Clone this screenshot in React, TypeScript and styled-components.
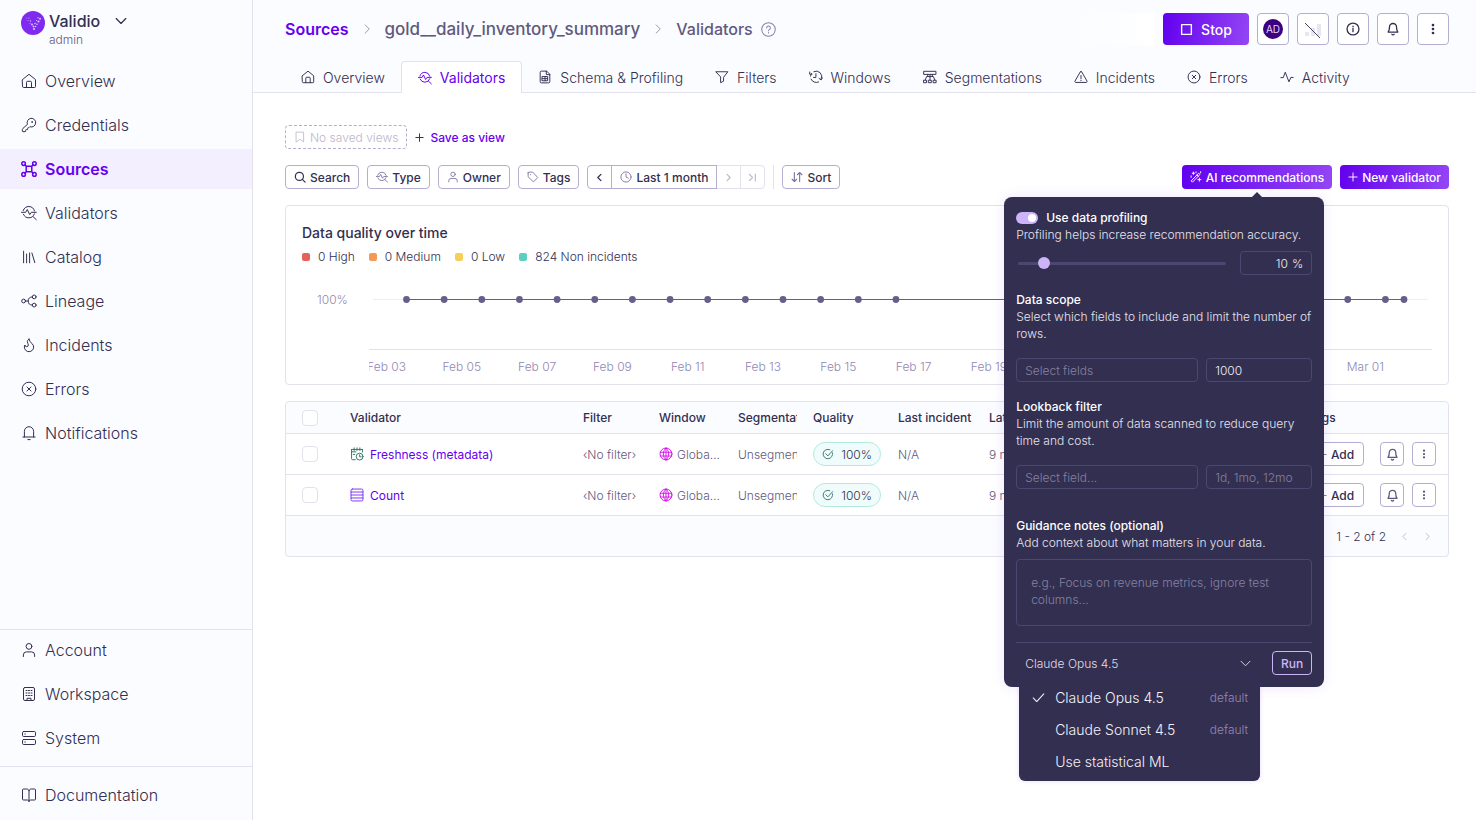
import React, { useState } from "react";
import styled, { createGlobalStyle, css } from "styled-components";
import { Flame, KeyRound } from "lucide-react";

const ink = "#332f50";
const body = "#5f5a7d";
const muted = "#9188b3";
const line = "#e3e1ee";
const control = "#b3aed2";
const violet = "#6700ef";
const tint = "#fbfcff";
const dark = "#332f50";
const darkLine = "#4c4770";
const lilac = "#cdb4f8";

const GlobalStyle = createGlobalStyle`
  *, *::before, *::after { box-sizing: border-box; }
  html, body, #root { height: 100%; }
  body {
    margin: 0;
    background: #fff;
    color: ${ink};
    font-family: Inter, "Liberation Sans", sans-serif;
    font-size: 12px;
    font-weight: 300;
    line-height: 17px;
  }
  button, input, select, textarea { font: inherit; color: inherit; margin: 0; }
  button { cursor: pointer; }
  a { text-decoration: none; color: inherit; }
  h1, h2, h3, p, ul { margin: 0; padding: 0; font: inherit; list-style: none; }
  svg { flex: none; display: block; }
`;

/* ---------- icons ---------- */

const shapes: Record<string, React.ReactNode> = {
  home: <path d="M1.5 6.6 8 1.3l6.5 5.3v6.9a1 1 0 0 1-1 1h-11a1 1 0 0 1-1-1zM5.5 14.5V9.3a1 1 0 0 1 1-1h3a1 1 0 0 1 1 1v5.2" />,
  sources: (
    <>
      <rect x="5.2" y="5.2" width="5.6" height="5.6" rx="1" />
      <circle cx="2.6" cy="2.6" r="1.8" />
      <circle cx="13.4" cy="2.6" r="1.8" />
      <circle cx="2.6" cy="13.4" r="1.8" />
      <circle cx="13.4" cy="13.4" r="1.8" />
      <path d="m3.9 3.9 1.6 1.6M12.1 3.9l-1.6 1.6M3.9 12.1l1.6-1.6M12.1 12.1l-1.6-1.6" />
    </>
  ),
  validators: (
    <>
      <path d="M2.4 9.2a5.9 5.9 0 0 0 11-.3M2.2 5.6a5.9 5.9 0 0 1 11.3.3" />
      <path d="M.5 7.3h4.2l1.6-2.8 2.4 5.2 1.6-2.4h5M12 11.6l3.3 3.1" />
    </>
  ),
  catalog: <path d="M2.6 2.2v11.6M5.6 5v8.8M8.6 4v9.8M10.9 4l2.9 9.6" />,
  lineage: (
    <>
      <circle cx="2.6" cy="8" r="1.9" />
      <circle cx="13.2" cy="3.9" r="1.9" />
      <circle cx="13.2" cy="12.1" r="1.9" />
      <path d="M4.5 8H7M11.3 3.9C8.6 3.9 7.2 5.4 7.2 8s1.4 4.1 4.1 4.1" />
    </>
  ),
  error: (
    <>
      <circle cx="8" cy="8" r="6.8" />
      <path d="m6 6 4 4M10 6l-4 4" />
    </>
  ),
  bell: <path d="M1.9 12h12.2M3.4 12V6.3a4.6 4.6 0 0 1 9.2 0V12M6.8 14.6h2.4" />,
  bellRound: <path d="M2.4 11.5C3.6 10 4 8.5 4 5.7a4 4 0 0 1 8 0c0 2.8.4 4.3 1.6 5.8zM6.7 14a1.5 1.5 0 0 0 2.6 0" />,
  user: (
    <>
      <circle cx="8" cy="4.4" r="2.9" />
      <path d="M2.4 14.5v-1.6a3 3 0 0 1 3-3h5.2a3 3 0 0 1 3 3v1.6" />
    </>
  ),
  building: (
    <>
      <rect x="2.5" y="1.5" width="11" height="13" rx="1.5" />
      <path d="M6 14.5v-2.2h4v2.2" />
      <path d="M5 4.5h1M7.5 4.5h1M10 4.5h1M5 7h1M7.5 7h1M10 7h1M5 9.5h1M7.5 9.5h1M10 9.5h1" />
    </>
  ),
  system: (
    <>
      <rect x="1.5" y="1.5" width="13" height="5" rx="1.2" />
      <rect x="1.5" y="9.5" width="13" height="5" rx="1.2" />
      <path d="M3.8 4h.6M3.8 12h.6" />
    </>
  ),
  book: <path d="M8 3.5v11M8 3.5C7.6 2.6 6.9 2 5.8 2H2.5a1 1 0 0 0-1 1v9a1 1 0 0 0 1 1h4c.9 0 1.5.6 1.5 1.5 0-.9.6-1.5 1.5-1.5h4a1 1 0 0 0 1-1V3a1 1 0 0 0-1-1h-3.3c-1.1 0-1.8.6-2.2 1.5z" />,
  down: <path d="m2.5 5.2 5.5 5.6 5.5-5.6" />,
  right: <path d="M5.5 2.5 11 8l-5.5 5.5" />,
  left: <path d="M10.5 2.5 5 8l5.5 5.5" />,
  end: <path d="M2.5 2.5 8 8l-5.5 5.5M13 2v12" />,
  help: (
    <>
      <circle cx="8" cy="8" r="7.2" />
      <path d="M6 6.3a2 2 0 1 1 2.9 1.8c-.7.4-.9.7-.9 1.3M8 11.3v.5" />
    </>
  ),
  schema: (
    <>
      <path d="M9.5 1.3H3.8a1.3 1.3 0 0 0-1.3 1.3v10.8a1.3 1.3 0 0 0 1.3 1.3h8.4a1.3 1.3 0 0 0 1.3-1.3V5.3zM9.5 1.3v4h4" />
      <path d="M5 7.5h6v4.8H5zM5 9.9h6M8 7.5v4.8" />
    </>
  ),
  filter: <path d="M1.3 2h13.4L9.8 8.3v4.5l-3.4 1.7V8.3z" />,
  windows: (
    <>
      <path d="M2.3 10.4a6.3 6.3 0 0 0 8.7 3.3M1.8 7a6.3 6.3 0 0 1 1-3M5.5 1.9a6.3 6.3 0 0 1 8.4 8.5" />
      <path d="M.8 2.3v2.5h2.7M15.5 8.8l-1.6 2.5-2.4-1.6M7.9 4.2v4.3H5.2" />
    </>
  ),
  segments: (
    <>
      <path d="M1.2 1.5h13.6V5H1.2z" />
      <path d="M8 5v6.5M2.5 11.5l1.6-4h7.8l1.6 4M5.4 5v2.5M10.6 5v2.5" />
      <path d="M1 11.7h3v2.8H1zM6.5 11.7h3v2.8h-3zM12 11.7h3v2.8h-3z" />
    </>
  ),
  warning: <path d="M8 1.8c.4 0 .7.2.9.5l6 10.4c.3.7-.1 1.5-.9 1.5H2c-.8 0-1.2-.8-.9-1.5l6-10.4c.2-.3.5-.5.9-.5zM8 6.3v3.5M8 11.6v.6" />,
  activity: <path d="M1 8.7h2.7L6 2.5l4.2 11 2.2-5H15" />,
  bookmark: <path d="M3.2 1.5h9.6v13L8 11l-4.8 3.5z" />,
  plus: <path d="M8 1.5v13M1.5 8h13" />,
  search: (
    <>
      <circle cx="7.2" cy="7.2" r="5.4" />
      <path d="m11.2 11.2 3.6 3.6" />
    </>
  ),
  tag: (
    <>
      <path d="M1.5 2.5v5.2l7 6.8 5.8-5.8-6.6-7.2H2.5a1 1 0 0 0-1 1z" />
      <path d="M4.7 4.9h.4" />
    </>
  ),
  clock: (
    <>
      <circle cx="8" cy="8" r="6.8" />
      <path d="M8 3.8V8l3 1.4" />
    </>
  ),
  sort: <path d="M4.5 2v12M1.5 11l3 3 3-3M11.5 14V2M8.5 5l3-3 3 3" />,
  wand: <path d="m2 12.8 9.6-9.9 1.7 1.7L3.7 14.5zM9.3 5.3l1.7 1.7M4.5 1.5v3M3 3h3M12.5 9.5v4M10.5 11.5h4M1.5 6.5v2M8 1.2v1.2M14.2 1v1.5" />,
  stop: <rect x="2" y="2" width="12" height="12" />,
  info: (
    <>
      <circle cx="8" cy="8" r="6.8" />
      <path d="M8 7.3V11M8 4.8v.5" />
    </>
  ),
  dots: (
    <g fill="currentColor" stroke="none">
      <circle cx="8" cy="2.7" r="1.8" />
      <circle cx="8" cy="8" r="1.8" />
      <circle cx="8" cy="13.3" r="1.8" />
    </g>
  ),
  calendar: (
    <>
      <path d="M6 14.5H3a1.2 1.2 0 0 1-1.2-1.2V2.8M14.2 5.8v-3M1.8 2.8h12.4M1.8 5.5h5M4.8 1v3M8 1v3M11.3 1v3M3.8 8.5h1.5" />
      <circle cx="11" cy="11" r="3.9" />
      <path d="M11 9v2.2h1.8" />
    </>
  ),
  rows: (
    <>
      <rect x="1.2" y="1.2" width="13.6" height="13.6" rx="1.5" />
      <path d="M1.2 4.6h13.6M1.2 8h13.6M1.2 11.4h13.6" />
    </>
  ),
  globe: (
    <>
      <circle cx="8" cy="8" r="6.8" />
      <path d="M1.5 6h13M1.5 10.3h13M8 1.2v13.6M8 1.2C3.8 5 3.8 11 8 14.8M8 1.2c4.2 3.8 4.2 9.8 0 13.6" />
    </>
  ),
  verified: <path d="M13.9 6.3A6.3 6.3 0 1 1 10.5 2.3M5 7.6l2.8 2.9 6.4-7" />,
  check: <path d="m1.5 8.6 4.3 4.4L14.5 3.6" />,
};

const Icon = ({ name, size = 14, width = 1.1 }: { name: string; size?: number; width?: number }) => (
  <svg width={size} height={size} viewBox="0 0 16 16" fill="none" stroke="currentColor" strokeWidth={width} strokeLinecap="round" strokeLinejoin="round" aria-hidden="true">
    {shapes[name]}
  </svg>
);

const logoDots: [number, number, number][] = [
  [5.5, 7, 0.4], [8, 7, 0.6], [17, 6.8, 0.7], [19, 7.8, 1], [7, 9.5, 0.5], [9.5, 10, 0.7],
  [15.5, 9.5, 0.6], [17.5, 10.5, 1.1], [9, 12.5, 0.5], [11, 13.5, 1], [14, 12.5, 0.8],
  [16, 13.3, 0.8], [12.5, 15.5, 0.9], [14.5, 15.5, 0.8], [13, 18, 1.1],
];
const Logo = () => (
  <svg width="24" height="24" viewBox="0 0 24 24" aria-hidden="true">
    <circle cx="12" cy="12" r="12" fill="#7f2aee" />
    <g fill="#d9c0ff">
      {logoDots.map(([x, y, r]) => <circle key={`${x}-${y}`} cx={x} cy={y} r={r} />)}
    </g>
  </svg>
);

const NoSignal = () => (
  <svg width="18" height="18" viewBox="0 0 18 18" aria-hidden="true">
    <path d="M1 12h4v4H1zM7 8h4v8H7zM13 4h4v12h-4z" fill="#e8e6f1" />
    <path d="M1 3 16 18" stroke={ink} strokeWidth="0.9" />
  </svg>
);

/* ---------- shell ---------- */

const Shell = styled.div`
  display: flex;
  min-height: 100%;
`;

const Sidebar = styled.aside`
  flex: none;
  display: flex;
  flex-direction: column;
  width: 253px;
  background: ${tint};
  border-right: 1px solid ${line};
`;

const Brand = styled.button`
  display: flex;
  align-items: flex-start;
  gap: 4px;
  height: 61px;
  padding: 11px 21px 0;
  border: 0;
  background: none;
  text-align: left;
`;

const BrandText = styled.span`
  display: flex;
  flex-direction: column;
  margin-right: 10px;
  color: ${body};
  font-weight: 300;
  strong {
    color: ${ink};
    font-size: 16px;
    font-weight: 500;
    line-height: 20px;
  }
`;

const BrandCaret = styled.span`
  padding-top: 3px;
`;

const NavGroup = styled.ul<{ $ruled?: boolean; $end?: boolean }>`
  display: flex;
  flex-direction: column;
  gap: 4px;
  ${(p) => p.$ruled && css`border-top: 1px solid ${line};`}
  ${(p) => p.$ruled && !p.$end && css`margin-top: auto; padding-bottom: 8px;`}
  ${(p) => p.$end && css`padding: 8px 0 5px;`}
`;

const NavLink = styled.a<{ $active?: boolean }>`
  display: flex;
  align-items: center;
  gap: 8px;
  height: 40px;
  padding: 0 21px;
  font-size: 16px;
  color: ${ink};
  ${(p) => p.$active && css`
    background: #f4effe;
    color: ${violet};
    font-weight: 600;
  `}
`;

const Main = styled.main`
  flex: 1;
  min-width: 0;
  display: flex;
  flex-direction: column;
`;

const Header = styled.header`
  padding: 13px 27px 0 32px;
  background: ${tint};
  border-bottom: 1px solid ${line};
`;

const HeaderRow = styled.div`
  display: flex;
  align-items: center;
  justify-content: space-between;
  height: 32px;
`;

const Crumbs = styled.nav`
  display: flex;
  align-items: center;
  gap: 12px;
  font-size: 16px;
  font-weight: 500;
  color: ${body};
  svg { color: #8983a8; }
`;

const CrumbLink = styled.a<{ $root?: boolean }>`
  font-size: 17px;
  ${(p) => p.$root && css`color: ${violet}; font-size: 16px; font-weight: 600;`}
`;

const CrumbEnd = styled.span`
  display: flex;
  align-items: center;
  gap: 8px;
`;

const HeaderActions = styled.div`
  display: flex;
  gap: 8px;
`;

const Fade = styled.div`
  width: 75px;
  background: linear-gradient(90deg, ${tint}, #fff);
`;

const gradient = "linear-gradient(100deg, #6200ee, #9446f4)";

const StopButton = styled.button`
  display: flex;
  align-items: center;
  justify-content: center;
  gap: 8px;
  width: 86px;
  border: 0;
  border-radius: 4px;
  background: ${gradient};
  color: #fff;
  font-size: 14px;
  font-weight: 500;
`;

const SquareButton = styled.button<{ $small?: boolean }>`
  display: grid;
  place-items: center;
  width: ${(p) => (p.$small ? 24 : 32)}px;
  height: ${(p) => (p.$small ? 24 : 32)}px;
  padding: 0;
  border: 1px solid ${control};
  border-radius: 4px;
  background: #fff;
`;

const Avatar = styled.span`
  display: grid;
  place-items: center;
  width: 20px;
  height: 20px;
  border-radius: 50%;
  background: #3c0080;
  color: #e3d3ff;
  font-size: 10px;
  font-weight: 400;
`;

const Tabs = styled.nav`
  display: flex;
  margin: 16px 0 -1px;
`;

const Tab = styled.a<{ $active?: boolean }>`
  display: flex;
  align-items: center;
  gap: 8px;
  height: 32px;
  padding: 0 16px;
  font-size: 14px;
  white-space: nowrap;
  ${(p) => p.$active && css`
    border: 1px solid ${line};
    border-bottom: 0;
    border-radius: 4px 4px 0 0;
    background: #fff;
    color: ${violet};
    font-weight: 400;
  `}
`;

/* ---------- content ---------- */

const Content = styled.div`
  display: flex;
  flex-direction: column;
  gap: 16px;
  padding: 32px 27px 32px 32px;
`;

const Row = styled.div`
  display: flex;
  align-items: center;
  gap: 8px;
`;

const smallButton = css`
  display: flex;
  align-items: center;
  justify-content: center;
  gap: 4px;
  height: 24px;
  padding: 0 8px;
  border: 1px solid ${control};
  border-radius: 4px;
  background: #fff;
  color: ${ink};
  font-weight: 500;
  white-space: nowrap;
`;

const Button = styled.button`
  ${smallButton}
  svg { color: #7d76a0; }
  &:first-child svg { color: ${ink}; }
`;

const EmptyViews = styled.button`
  ${smallButton}
  border-style: dashed;
  color: #bab6cd;
  font-weight: 300;
`;

const TextButton = styled.button`
  ${smallButton}
  gap: 6px;
  border: 0;
  padding: 0;
  background: none;
  color: ${violet};
`;

const PrimaryButton = styled.button`
  ${smallButton}
  border: 0;
  background: ${gradient};
  color: #fff;
`;

const Segmented = styled.div`
  display: flex;
  isolation: isolate;
`;

const Segment = styled.button<{ $edge?: "left" | "right"; $icon?: boolean }>`
  ${smallButton}
  position: relative;
  margin-right: -1px;
  border-radius: 0;
  ${(p) => p.$icon && css`padding: 0 7px;`}
  ${(p) => !p.$icon && css`svg { color: #7d76a0; }`}
  ${(p) => p.$edge === "left" && css`border-radius: 4px 0 0 4px;`}
  ${(p) => p.$edge === "right" && css`border-radius: 0 4px 4px 0; margin-right: 0;`}
  &:disabled { color: #bab6cd; border-color: ${line}; z-index: -1; }
`;

const Divider = styled.span`
  width: 1px;
  height: 24px;
  background: ${line};
`;

const PushRight = styled.div`
  display: flex;
  gap: 8px;
  margin-left: auto;
`;

const Card = styled.section`
  border: 1px solid ${line};
  border-radius: 4px;
  padding: 18px 16px 0;
`;

const CardTitle = styled.h2`
  font-size: 14px;
  font-weight: 500;
  line-height: 18px;
`;

const Legend = styled.ul`
  display: flex;
  gap: 14px;
  margin-top: 6px;
`;

const LegendItem = styled.li<{ $color: string }>`
  display: flex;
  align-items: center;
  gap: 8px;
  &::before {
    content: "";
    width: 8px;
    height: 8px;
    border-radius: 2px;
    background: ${(p) => p.$color};
  }
`;

const Plot = styled.svg`
  width: 100%;
  height: 119px;
  text {
    font-size: 12px;
    fill: ${muted};
  }
`;

const TableCard = styled.section`
  border: 1px solid ${line};
  border-radius: 4px;
  background: ${tint};
  overflow: hidden;
`;

const Table = styled.table`
  width: 100%;
  table-layout: fixed;
  border-collapse: separate;
  border-spacing: 0;
  th, td {
    padding: 0 0 0 16px;
    border-bottom: 1px solid ${line};
    text-align: left;
    white-space: nowrap;
    overflow: hidden;
    font-weight: 300;
    color: ${body};
  }
  th { height: 32px; color: ${ink}; font-weight: 500; }
  td { height: 41px; background: #fff; }
`;

const Check = styled.input`
  appearance: none;
  display: block;
  width: 16px;
  height: 16px;
  margin: 0;
  border: 1px solid ${line};
  border-radius: 4px;
  background: #fff;
`;

const CellFlex = styled.div<{ $tone?: string }>`
  display: flex;
  align-items: center;
  gap: 6px;
  > svg { color: ${(p) => p.$tone ?? ink}; }
`;

const WindowCell = styled(CellFlex)`
  gap: 4px;
`;

const ItemLink = styled.a`
  color: ${violet};
  font-weight: 400;
`;

const Ellipsis = styled.span`
  overflow: hidden;
  text-overflow: ellipsis;
`;

const QualityPill = styled.span`
  display: flex;
  align-items: center;
  justify-content: space-between;
  width: 68px;
  height: 24px;
  padding: 0 8px;
  border: 1px solid #b2ebdd;
  border-radius: 12px;
  background: #effcfb;
  color: ${ink};
  svg { color: #417c72; }
`;

const AddButton = styled.button`
  ${smallButton}
  width: 56px;
`;

const Pager = styled.footer`
  display: flex;
  align-items: center;
  justify-content: flex-end;
  gap: 14px;
  height: 40px;
  padding: 0 16px;
  button {
    display: grid;
    padding: 0;
    border: 0;
    background: none;
    color: ${control};
  }
`;

/* ---------- recommendations popover ---------- */

const Anchor = styled.div`
  position: relative;
`;

const Popover = styled.form`
  position: absolute;
  z-index: 5;
  top: 32px;
  right: 8px;
  display: flex;
  flex-direction: column;
  gap: 16px;
  width: 320px;
  padding: 12px;
  border-radius: 8px;
  background: ${dark};
  color: #e6e4ee;
  box-shadow: 0 0 14px rgba(103, 0, 239, 0.1);
  &::before {
    content: "";
    position: absolute;
    top: -5px;
    right: 61px;
    border: 6px solid transparent;
    border-top: 0;
    border-bottom-color: ${dark};
  }
`;

const Group = styled.div<{ $spaced?: boolean }>`
  display: flex;
  flex-direction: column;
  ${(p) => p.$spaced && css`padding-top: 12px;`}
`;

const GroupTitle = styled.h3`
  color: #fff;
  font-weight: 500;
`;

const SwitchLabel = styled.label`
  display: flex;
  align-items: center;
  gap: 8px;
  color: #fff;
  font-weight: 500;
`;

const Switch = styled.input`
  appearance: none;
  display: flex;
  justify-content: flex-end;
  width: 22px;
  height: 12px;
  margin: 0;
  padding: 2px;
  border-radius: 6px;
  background: ${lilac};
  &::before {
    content: "";
    width: 8px;
    height: 8px;
    border-radius: 50%;
    background: #fff;
  }
  &:not(:checked) { justify-content: flex-start; background: ${darkLine}; }
`;

const FieldRow = styled.div<{ $top: number }>`
  display: flex;
  gap: 8px;
  margin-top: ${(p) => p.$top}px;
`;

const field = css`
  min-width: 0;
  height: 24px;
  padding: 0 8px;
  border: 1px solid ${darkLine};
  border-radius: 4px;
  background: transparent;
  color: #f0eef5;
  outline: 0;
  &::placeholder { color: #8681a0; opacity: 1; }
`;

const Input = styled.input<{ $wide?: boolean }>`
  ${field}
  ${(p) => (p.$wide ? css`flex: 1;` : css`width: 106px;`)}
`;

const Slider = styled.input`
  appearance: none;
  flex: 1;
  min-width: 0;
  height: 24px;
  margin: 0 6px 0 2px;
  background: transparent;
  &::-webkit-slider-runnable-track {
    height: 3px;
    border-radius: 2px;
    background: ${darkLine};
  }
  &::-webkit-slider-thumb {
    appearance: none;
    width: 12px;
    height: 12px;
    margin-top: -5px;
    border-radius: 50%;
    background: ${lilac};
  }
`;

const PercentBox = styled.label`
  ${field}
  display: flex;
  align-items: center;
  justify-content: flex-end;
  gap: 4px;
  width: 72px;
  input {
    width: 32px;
    padding: 0;
    border: 0;
    outline: 0;
    background: none;
    text-align: right;
  }
`;

const Notes = styled.textarea`
  ${field}
  height: 67px;
  margin-top: 8px;
  padding: 14px;
  line-height: 17px;
  resize: none;
`;

const RunRow = styled.div`
  position: relative;
  display: flex;
  gap: 8px;
  padding-top: 8px;
  border-top: 1px solid ${darkLine};
`;

const ModelPicker = styled.div`
  flex: 1;
  display: grid;
  align-items: center;
  color: #e0deea;
  > * { grid-area: 1 / 1; }
  svg { justify-self: end; margin-right: 12px; pointer-events: none; }
`;

const Select = styled.select`
  appearance: none;
  width: 100%;
  height: 24px;
  padding: 0 9px;
  border: 0;
  outline: 0;
  background: transparent;
`;

const RunButton = styled.button`
  ${smallButton}
  background: none;
  border-color: ${lilac};
  color: ${lilac};
`;

const Menu = styled.ul`
  position: absolute;
  top: 34px;
  left: 3px;
  width: 241px;
  padding: 4px 0;
  border-radius: 6px;
  background: ${dark};
  box-shadow: 0 0 4px rgba(103, 0, 239, 0.16);
`;

const MenuOption = styled.button`
  display: grid;
  grid-template-columns: 14px 1fr auto;
  align-items: center;
  gap: 9px;
  width: 100%;
  height: 32px;
  padding: 0 12px 0 13px;
  border: 0;
  background: none;
  color: #f4f2f8;
  font-size: 14px;
  text-align: left;
  small {
    color: #9488b8;
    font-size: 12px;
  }
`;

/* ---------- data ---------- */

type NavEntry = { label: string; icon: React.ReactNode; active?: boolean };

const navIcon = (name: string, width?: number) => <Icon name={name} size={16} width={width ?? 1} />;

const primaryNav: NavEntry[] = [
  { label: "Overview", icon: navIcon("home") },
  { label: "Credentials", icon: <KeyRound size={16} strokeWidth={1.5} /> },
  { label: "Sources", icon: navIcon("sources", 1.5), active: true },
  { label: "Validators", icon: navIcon("validators") },
  { label: "Catalog", icon: navIcon("catalog") },
  { label: "Lineage", icon: navIcon("lineage") },
  { label: "Incidents", icon: <Flame size={16} strokeWidth={1.5} /> },
  { label: "Errors", icon: navIcon("error") },
  { label: "Notifications", icon: navIcon("bell") },
];
const settingsNav: NavEntry[] = [
  { label: "Account", icon: navIcon("user") },
  { label: "Workspace", icon: navIcon("building") },
  { label: "System", icon: navIcon("system") },
];
const helpNav: NavEntry[] = [{ label: "Documentation", icon: navIcon("book") }];

const tabs = [
  ["Overview", "home"],
  ["Validators", "validators"],
  ["Schema & Profiling", "schema"],
  ["Filters", "filter"],
  ["Windows", "windows"],
  ["Segmentations", "segments"],
  ["Incidents", "warning"],
  ["Errors", "error"],
  ["Activity", "activity"],
];

const legend = [
  ["0 High", "#e66258"],
  ["0 Medium", "#f29a56"],
  ["0 Low", "#f6cf5a"],
  ["824 Non incidents", "#5ccfc3"],
];

const ticks = ["Feb 03", "Feb 05", "Feb 07", "Feb 09", "Feb 11", "Feb 13", "Feb 15", "Feb 17", "Feb 19", "Feb 21", "Feb 23", "Feb 25", "Feb 27", "Mar 01"];

const columns: [string, number | undefined][] = [
  ["Validator", undefined],
  ["Filter", 76],
  ["Window", 79],
  ["Segmentation", 75],
  ["Quality", 85],
  ["Last incident", 91],
  ["Latest run", 319],
  ["Tags", 72],
  ["", 84],
];

const validators = [
  { name: "Freshness (metadata)", icon: "calendar", tone: "#2f7466" },
  { name: "Count", icon: "rows", tone: "#7a35f2" },
];

const models = [
  { name: "Claude Opus 4.5", note: "default" },
  { name: "Claude Sonnet 4.5", note: "default" },
  { name: "Use statistical ML", note: "" },
];

/* ---------- sections ---------- */

const Nav = ({ entries, ruled, end }: { entries: NavEntry[]; ruled?: boolean; end?: boolean }) => (
  <NavGroup $ruled={ruled} $end={end}>
    {entries.map((e) => (
      <li key={e.label}>
        <NavLink href="#" $active={e.active}>
          {e.icon}
          {e.label}
        </NavLink>
      </li>
    ))}
  </NavGroup>
);

const pct = (n: number) => `${(n / 1130) * 100}%`;

/* One point per day, with a gap of three days that have no measurements. */
const QualityChart = () => {
  const daily = Array.from({ length: 27 }, (_, i) => 104.5 + i * 37.65);
  const points = daily.filter((_, i) => i < 14 || i > 16).concat(1102);
  return (
    <Plot role="img" aria-label="Data quality by day">
      <text x="15" y="39">100%</text>
      <line x1={pct(71)} x2={pct(1126)} y1="34.5" y2="34.5" stroke="#efeef5" />
      <line x1={pct(104.5)} x2={pct(1102)} y1="34.5" y2="34.5" stroke="#65608a" />
      {points.map((x) => (
        <circle key={x} cx={pct(x)} cy="34.5" r="3.4" fill="#65608a" />
      ))}
      <line x1={pct(67)} x2="100%" y1="84.5" y2="84.5" stroke={line} />
      <svg x={pct(67)} y="85" width={pct(1063)} height="34">
        {ticks.map((t, i) => (
          <text key={t} x={`${((17.5 + i * 75.3) / 1063) * 100}%`} y="21" textAnchor="middle">{t}</text>
        ))}
      </svg>
    </Plot>
  );
};

const Recommendations = () => {
  const [model, setModel] = useState(models[0].name);
  const [sample, setSample] = useState(10);
  const [open, setOpen] = useState(true);
  return (
    <Popover onSubmit={(e) => e.preventDefault()}>
      <Group>
        <SwitchLabel>
          <Switch type="checkbox" defaultChecked />
          Use data profiling
        </SwitchLabel>
        <p>Profiling helps increase recommendation accuracy.</p>
        <FieldRow $top={8}>
          <Slider type="range" min={0} max={100} value={sample} aria-label="Sample size" onChange={(e) => setSample(Number(e.target.value))} />
          <PercentBox>
            <input value={sample} aria-label="Sample percentage" onChange={(e) => setSample(Number(e.target.value) || 0)} />%
          </PercentBox>
        </FieldRow>
      </Group>
      <Group>
        <GroupTitle>Data scope</GroupTitle>
        <p>Select which fields to include and limit the number of rows.</p>
        <FieldRow $top={16}>
          <Input $wide placeholder="Select fields" aria-label="Fields" />
          <Input defaultValue="1000" aria-label="Row limit" />
        </FieldRow>
      </Group>
      <Group>
        <GroupTitle>Lookback filter</GroupTitle>
        <p>Limit the amount of data scanned to reduce query time and cost.</p>
        <FieldRow $top={16}>
          <Input $wide placeholder="Select field..." aria-label="Lookback field" />
          <Input placeholder="1d, 1mo, 12mo" aria-label="Lookback period" />
        </FieldRow>
      </Group>
      <Group $spaced>
        <GroupTitle>Guidance notes (optional)</GroupTitle>
        <p>Add context about what matters in your data.</p>
        <Notes placeholder="e.g., Focus on revenue metrics, ignore test columns..." aria-label="Guidance notes" />
      </Group>
      <RunRow>
        <ModelPicker>
          <Select value={model} aria-label="Model" onMouseDown={(e) => { e.preventDefault(); setOpen(!open); }} onChange={(e) => setModel(e.target.value)}>
            {models.map((m) => <option key={m.name}>{m.name}</option>)}
          </Select>
          <Icon name="down" size={13} />
        </ModelPicker>
        <RunButton type="submit">Run</RunButton>
        {open && (
          <Menu>
            {models.map((m) => (
              <li key={m.name}>
                <MenuOption type="button" onClick={() => { setModel(m.name); setOpen(false); }}>
                  <span>{m.name === model && <Icon name="check" size={13} width={1.3} />}</span>
                  {m.name}
                  <small>{m.note}</small>
                </MenuOption>
              </li>
            ))}
          </Menu>
        )}
      </RunRow>
    </Popover>
  );
};

export default function App() {
  return (
    <>
      <GlobalStyle />
      <Shell>
        <Sidebar>
          <Brand type="button">
            <Logo />
            <BrandText>
              <strong>Validio</strong>
              admin
            </BrandText>
            <BrandCaret><Icon name="down" size={14} width={1.4} /></BrandCaret>
          </Brand>
          <Nav entries={primaryNav} />
          <Nav entries={settingsNav} ruled />
          <Nav entries={helpNav} ruled end />
        </Sidebar>

        <Main>
          <Header>
            <HeaderRow>
              <Crumbs aria-label="Breadcrumb">
                <CrumbLink href="#" $root>Sources</CrumbLink>
                <Icon name="right" size={12} />
                <CrumbLink href="#">gold__daily_inventory_summary</CrumbLink>
                <Icon name="right" size={12} />
                <CrumbEnd>
                  Validators
                  <Icon name="help" size={15} />
                </CrumbEnd>
              </Crumbs>
              <HeaderActions>
                <Fade />
                <StopButton type="button"><Icon name="stop" size={13} width={1.7} />Stop</StopButton>
                <SquareButton type="button"><Avatar>AD</Avatar></SquareButton>
                <SquareButton type="button" aria-label="Signal"><NoSignal /></SquareButton>
                <SquareButton type="button" aria-label="Information"><Icon name="info" width={1.5} /></SquareButton>
                <SquareButton type="button" aria-label="Notifications"><Icon name="bellRound" width={1.5} /></SquareButton>
                <SquareButton type="button" aria-label="More"><Icon name="dots" size={12} /></SquareButton>
              </HeaderActions>
            </HeaderRow>
            <Tabs>
              {tabs.map(([label, icon]) => (
                <Tab key={label} href="#" $active={label === "Validators"}>
                  <Icon name={icon} />
                  {label}
                </Tab>
              ))}
            </Tabs>
          </Header>

          <Content>
            <Row>
              <EmptyViews type="button"><Icon name="bookmark" size={12} />No saved views</EmptyViews>
              <TextButton type="button"><Icon name="plus" size={9} width={1.8} />Save as view</TextButton>
            </Row>
            <Row>
              <Button type="button"><Icon name="search" size={12} width={1.6} />Search</Button>
              <Button type="button"><Icon name="validators" size={12} width={1.2} />Type</Button>
              <Button type="button"><Icon name="user" size={12} width={1.2} />Owner</Button>
              <Button type="button"><Icon name="tag" size={12} width={1.2} />Tags</Button>
              <Segmented>
                <Segment type="button" $icon $edge="left" aria-label="Previous"><Icon name="left" size={9} width={2.2} /></Segment>
                <Segment type="button"><Icon name="clock" size={12} width={1.2} />Last 1 month</Segment>
                <Segment type="button" $icon disabled aria-label="Next"><Icon name="right" size={9} width={2} /></Segment>
                <Segment type="button" $icon disabled $edge="right" aria-label="Latest"><Icon name="end" size={9} width={2} /></Segment>
              </Segmented>
              <Divider />
              <Button type="button"><Icon name="sort" size={12} width={1.5} />Sort</Button>
              <PushRight>
                <Anchor>
                  <PrimaryButton type="button"><Icon name="wand" size={12} width={1.3} />AI recommendations</PrimaryButton>
                  <Recommendations />
                </Anchor>
                <PrimaryButton type="button"><Icon name="plus" size={10} width={1.5} />New validator</PrimaryButton>
              </PushRight>
            </Row>

            <Card>
              <CardTitle>Data quality over time</CardTitle>
              <Legend>
                {legend.map(([label, color]) => <LegendItem key={label} $color={color}>{label}</LegendItem>)}
              </Legend>
              <QualityChart />
            </Card>

            <TableCard>
              <Table>
                <colgroup>
                  <col width={48} />
                  {columns.map(([label, width]) => <col key={label} width={width} />)}
                </colgroup>
                <thead>
                  <tr>
                    <th><Check type="checkbox" aria-label="Select all" /></th>
                    {columns.map(([label]) => <th key={label}>{label}</th>)}
                  </tr>
                </thead>
                <tbody>
                  {validators.map((v) => (
                    <tr key={v.name}>
                      <td><Check type="checkbox" aria-label={`Select ${v.name}`} /></td>
                      <td>
                        <CellFlex $tone={v.tone}>
                          <Icon name={v.icon} />
                          <ItemLink href="#">{v.name}</ItemLink>
                        </CellFlex>
                      </td>
                      <td>‹No filter›</td>
                      <td>
                        <WindowCell $tone="#d114e8">
                          <Icon name="globe" />
                          <Ellipsis>Global window</Ellipsis>
                        </WindowCell>
                      </td>
                      <td>Unsegmented</td>
                      <td><QualityPill><Icon name="verified" size={12} width={1.3} />100%</QualityPill></td>
                      <td>N/A</td>
                      <td>9 minutes ago</td>
                      <td><AddButton type="button"><Icon name="plus" size={9} />Add</AddButton></td>
                      <td>
                        <Row>
                          <SquareButton $small type="button" aria-label="Notify"><Icon name="bellRound" size={13} width={1.6} /></SquareButton>
                          <SquareButton $small type="button" aria-label="More"><Icon name="dots" size={10} /></SquareButton>
                        </Row>
                      </td>
                    </tr>
                  ))}
                </tbody>
              </Table>
              <Pager>
                1 - 2 of 2
                <button type="button" aria-label="Previous page"><Icon name="left" size={9} width={1.5} /></button>
                <button type="button" aria-label="Next page"><Icon name="right" size={9} width={1.5} /></button>
              </Pager>
            </TableCard>
          </Content>
        </Main>
      </Shell>
    </>
  );
}
